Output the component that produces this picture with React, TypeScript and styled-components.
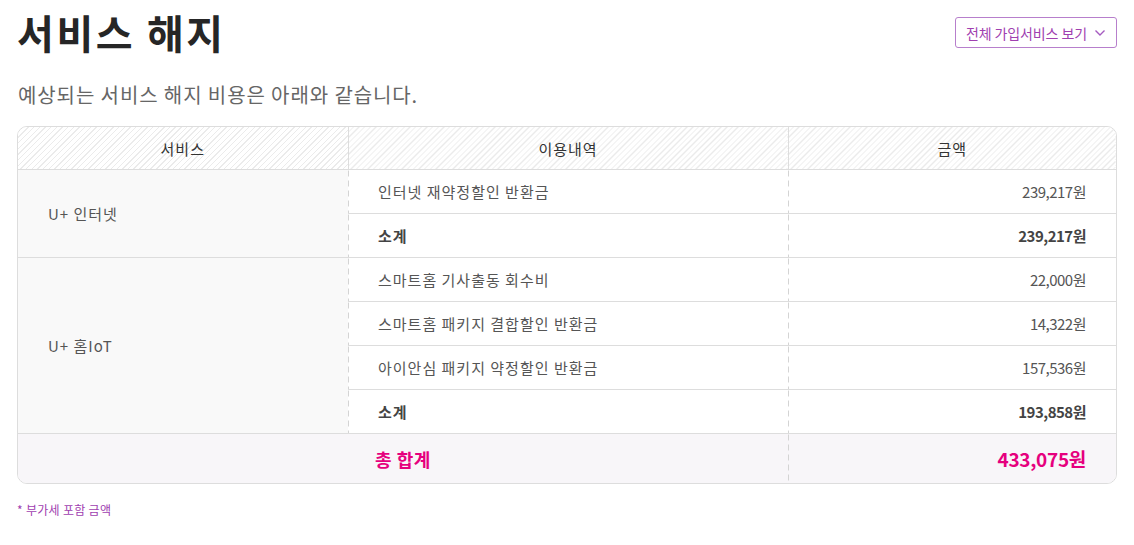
import React from 'react';
import styled, {createGlobalStyle} from "styled-components";

const GlobalStyle = createGlobalStyle`
    body {
        margin: 0;
        background: #fff;
        font-family: "Noto Sans CJK KR", "Noto Sans", sans-serif;
        color: #555;
    }
`

type LineType = {
    name: string;
    amount: string;
}

type GroupType = {
    service: string;
    lines: LineType[];
    subtotal: string;
}

const groups: GroupType[] = [
    {
        service: 'U+ 인터넷',
        lines: [{name: '인터넷 재약정할인 반환금', amount: '239,217원'}],
        subtotal: '239,217원',
    },
    {
        service: 'U+ 홈IoT',
        lines: [
            {name: '스마트홈 기사출동 회수비', amount: '22,000원'},
            {name: '스마트홈 패키지 결합할인 반환금', amount: '14,322원'},
            {name: '아이안심 패키지 약정할인 반환금', amount: '157,536원'},
        ],
        subtotal: '193,858원',
    },
]

// vertical dashed divider, drawn as a background so the dash length can be set
const dash = `linear-gradient(#d4d4d4 0, #d4d4d4 6px, transparent 6px) left top / 1px 10px repeat-y`

export default function App() {
    return (
        <Page>
            <GlobalStyle/>
            <Header>
                <Title>서비스 해지</Title>
                <AllButton>
                    전체 가입서비스 보기
                    <svg width="12" height="8" viewBox="0 0 12 8">
                        <path d="M1.5 1.5 L6 6 L10.5 1.5" fill="none" stroke="#a55bc0" strokeWidth="1.4"/>
                    </svg>
                </AllButton>
            </Header>
            <Lead>예상되는 서비스 해지 비용은 아래와 같습니다.</Lead>
            <TableBox>
                <Table>
                    <colgroup>
                        <col style={{width: 330}}/>
                        <col style={{width: 440}}/>
                        <col/>
                    </colgroup>
                    <thead>
                    <tr>
                        <Th>서비스</Th>
                        <Th>이용내역</Th>
                        <Th>금액</Th>
                    </tr>
                    </thead>
                    <tbody>
                    {groups.map(g => (
                        <React.Fragment key={g.service}>
                            {g.lines.map((l, i) => (
                                <tr key={l.name}>
                                    {i === 0 && <ServiceCell rowSpan={g.lines.length + 1}>{g.service}</ServiceCell>}
                                    <NameCell>{l.name}</NameCell>
                                    <AmountCell>{l.amount}</AmountCell>
                                </tr>
                            ))}
                            <tr>
                                <NameCell bold>소계</NameCell>
                                <AmountCell bold>{g.subtotal}</AmountCell>
                            </tr>
                        </React.Fragment>
                    ))}
                    <TotalRow>
                        <TotalLabel colSpan={2}>총 합계</TotalLabel>
                        <TotalAmount>433,075원</TotalAmount>
                    </TotalRow>
                    </tbody>
                </Table>
            </TableBox>
            <Note>* 부가세 포함 금액</Note>
        </Page>
    );
}

const Page = styled.div`
    padding: 0 17px 0 17px;
    width: 1100px;
`

const Header = styled.div`
    display: flex;
    justify-content: space-between;
    align-items: flex-start;
    padding-top: 5px;
`

const Title = styled.h1`
    margin: 0;
    font-size: 40px;
    line-height: 54px;
    font-weight: 700;
    color: #262626;
    letter-spacing: 2.6px;
`

const AllButton = styled.button`
    display: flex;
    align-items: center;
    gap: 7px;
    margin-top: 12px;
    height: 31px;
    padding: 0 10px 0 10px;
    border: 1px solid #b77fcc;
    border-radius: 3px;
    background: #fff;
    color: #a040b0;
    font-family: inherit;
    font-size: 14px;
    letter-spacing: -0.1px;
    cursor: pointer;
`

const Lead = styled.p`
    margin: 22px 0 0 1px;
    font-size: 20px;
    line-height: 28px;
    color: #666;
    letter-spacing: 0.9px;
`

const TableBox = styled.div`
    margin-top: 17px;
    border: 1px solid #ddd;
    border-radius: 10px;
    overflow: hidden;
`

const Table = styled.table`
    width: 100%;
    border-collapse: collapse;
    table-layout: fixed;
    font-size: 15px;
    color: #555;
    letter-spacing: 1px;
`

const Th = styled.th`
    height: 42px;
    padding: 0;
    font-weight: 400;
    color: #333;
    border-bottom: 1px solid #ddd;
    background: repeating-linear-gradient(135deg, #fff 0, #fff 3px, #ebebeb 3px, #ebebeb 4px);

    & + & {
        border-left: 1px solid #ddd;
    }
`

const ServiceCell = styled.td`
    padding: 0 30px;
    background: #f9f9f9;
    border-bottom: 1px solid #ddd;
    color: #555;
`

const NameCell = styled.td<{ bold?: boolean }>`
    height: 43px;
    padding: 0 30px;
    border-bottom: 1px solid #ddd;
    background: ${dash};
    font-weight: ${p => p.bold ? 700 : 400};
    color: ${p => p.bold ? '#444' : '#555'};
`

const AmountCell = styled.td<{ bold?: boolean }>`
    padding: 0 30px;
    text-align: right;
    border-bottom: 1px solid #ddd;
    background: ${dash};
    font-weight: ${p => p.bold ? 700 : 400};
    color: ${p => p.bold ? '#444' : '#555'};
    letter-spacing: -0.5px;
`

const TotalRow = styled.tr`
    background: #f8f6f9;
`

const TotalLabel = styled.td`
    height: 49px;
    padding: 0;
    text-align: center;
    font-size: 18px;
    font-weight: 700;
    color: #e6007e;
    letter-spacing: 0.5px;
`

const TotalAmount = styled.td`
    padding: 0 30px;
    text-align: right;
    font-size: 19px;
    font-weight: 700;
    color: #e6007e;
    background: ${dash};
    letter-spacing: -0.3px;
`

const Note = styled.p`
    margin: 17px 0 0 0;
    font-size: 12px;
    color: #a040b0;
    letter-spacing: 0.3px;
`
